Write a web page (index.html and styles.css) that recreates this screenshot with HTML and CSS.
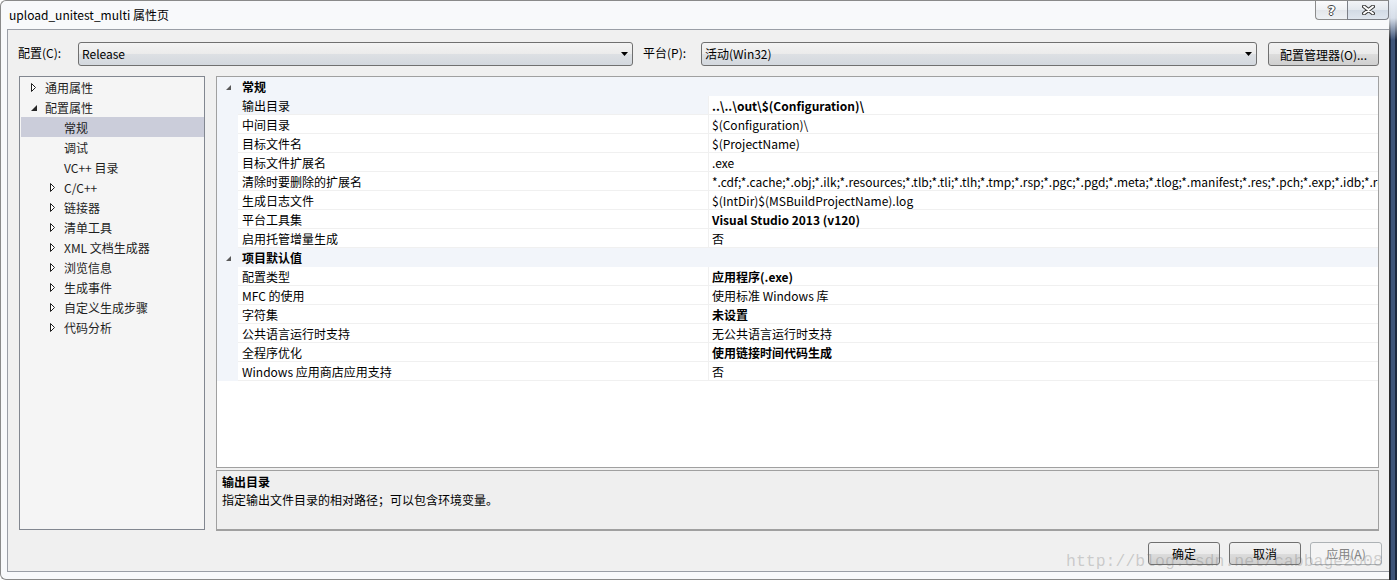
FILE: index.html
```html
<!DOCTYPE html>
<html lang="zh-CN">
<head>
<meta charset="utf-8">
<title>upload_unitest_multi 属性页</title>
<link rel="stylesheet" href="styles.css">
</head>
<body>
<div class="window">
  <div class="frame">
    <div class="titlebar">
      <span class="title">upload_unitest_multi 属性页</span>
      <div class="caption">
        <div class="cap-btn help"><span>?</span></div>
        <div class="cap-btn close">
          <svg width="13" height="10" viewBox="0 0 13 10"><path d="M2 1.5 L11 8.5 M11 1.5 L2 8.5" stroke="#3a3a3a" stroke-width="4" stroke-linecap="round"/><path d="M2 1.5 L11 8.5 M11 1.5 L2 8.5" stroke="#fff" stroke-width="2" stroke-linecap="round"/></svg>
        </div>
      </div>
    </div>
    <div class="client">
      <div class="config-row">
        <span class="lbl lbl-config">配置(C):</span>
        <div class="combo combo-config"><span>Release</span><svg class="arrow" width="7" height="4" viewBox="0 0 7 4"><path d="M0 0 H7 L3.5 4 Z" fill="#000"/></svg></div>
        <span class="lbl lbl-platform">平台(P):</span>
        <div class="combo combo-platform"><span>活动(Win32)</span><svg class="arrow" width="7" height="4" viewBox="0 0 7 4"><path d="M0 0 H7 L3.5 4 Z" fill="#000"/></svg></div>
        <div class="btn btn-mgr">配置管理器(O)...</div>
      </div>
      <div class="main">
        <div class="tree">
          <div class="titem l0"><span class="ico"><svg width="6" height="9" viewBox="0 0 6 9"><path d="M0.5 0.5 L4.5 4.5 L0.5 8.5 Z" fill="#fff" stroke="#1e1e1e"/></svg></span>通用属性</div>
          <div class="titem l0"><span class="ico exp"><svg width="6" height="6" viewBox="0 0 6 6"><path d="M6 0 V6 H0 Z" fill="#262626"/></svg></span>配置属性</div>
          <div class="titem l1 sel"><span class="ico"></span>常规</div>
          <div class="titem l1"><span class="ico"></span>调试</div>
          <div class="titem l1"><span class="ico"></span>VC++ 目录</div>
          <div class="titem l1"><span class="ico"><svg width="6" height="9" viewBox="0 0 6 9"><path d="M0.5 0.5 L4.5 4.5 L0.5 8.5 Z" fill="#fff" stroke="#1e1e1e"/></svg></span>C/C++</div>
          <div class="titem l1"><span class="ico"><svg width="6" height="9" viewBox="0 0 6 9"><path d="M0.5 0.5 L4.5 4.5 L0.5 8.5 Z" fill="#fff" stroke="#1e1e1e"/></svg></span>链接器</div>
          <div class="titem l1"><span class="ico"><svg width="6" height="9" viewBox="0 0 6 9"><path d="M0.5 0.5 L4.5 4.5 L0.5 8.5 Z" fill="#fff" stroke="#1e1e1e"/></svg></span>清单工具</div>
          <div class="titem l1"><span class="ico"><svg width="6" height="9" viewBox="0 0 6 9"><path d="M0.5 0.5 L4.5 4.5 L0.5 8.5 Z" fill="#fff" stroke="#1e1e1e"/></svg></span>XML 文档生成器</div>
          <div class="titem l1"><span class="ico"><svg width="6" height="9" viewBox="0 0 6 9"><path d="M0.5 0.5 L4.5 4.5 L0.5 8.5 Z" fill="#fff" stroke="#1e1e1e"/></svg></span>浏览信息</div>
          <div class="titem l1"><span class="ico"><svg width="6" height="9" viewBox="0 0 6 9"><path d="M0.5 0.5 L4.5 4.5 L0.5 8.5 Z" fill="#fff" stroke="#1e1e1e"/></svg></span>生成事件</div>
          <div class="titem l1"><span class="ico"><svg width="6" height="9" viewBox="0 0 6 9"><path d="M0.5 0.5 L4.5 4.5 L0.5 8.5 Z" fill="#fff" stroke="#1e1e1e"/></svg></span>自定义生成步骤</div>
          <div class="titem l1"><span class="ico"><svg width="6" height="9" viewBox="0 0 6 9"><path d="M0.5 0.5 L4.5 4.5 L0.5 8.5 Z" fill="#fff" stroke="#1e1e1e"/></svg></span>代码分析</div>
        </div>
        <div class="right">
          <div class="grid">
            <div class="prow cat"><span class="gut"><svg width="5" height="5" viewBox="0 0 5 5"><path d="M5 0 V5 H0 Z" fill="#595959"/></svg></span><span class="cname">常规</span></div>
            <div class="prow sel"><span class="gut"></span><span class="pname">输出目录</span><span class="pval b">..\..\out\$(Configuration)\</span></div>
            <div class="prow"><span class="gut"></span><span class="pname">中间目录</span><span class="pval">$(Configuration)\</span></div>
            <div class="prow"><span class="gut"></span><span class="pname">目标文件名</span><span class="pval">$(ProjectName)</span></div>
            <div class="prow"><span class="gut"></span><span class="pname">目标文件扩展名</span><span class="pval">.exe</span></div>
            <div class="prow"><span class="gut"></span><span class="pname">清除时要删除的扩展名</span><span class="pval">*.cdf;*.cache;*.obj;*.ilk;*.resources;*.tlb;*.tli;*.tlh;*.tmp;*.rsp;*.pgc;*.pgd;*.meta;*.tlog;*.manifest;*.res;*.pch;*.exp;*.idb;*.rep;*.xdc;*.pdb;*_manifest.rc;*.bsc;*.sbr;*.xml;*.metagen;*.bi</span></div>
            <div class="prow"><span class="gut"></span><span class="pname">生成日志文件</span><span class="pval">$(IntDir)$(MSBuildProjectName).log</span></div>
            <div class="prow"><span class="gut"></span><span class="pname">平台工具集</span><span class="pval b">Visual Studio 2013 (v120)</span></div>
            <div class="prow"><span class="gut"></span><span class="pname">启用托管增量生成</span><span class="pval">否</span></div>
            <div class="prow cat"><span class="gut"><svg width="5" height="5" viewBox="0 0 5 5"><path d="M5 0 V5 H0 Z" fill="#595959"/></svg></span><span class="cname">项目默认值</span></div>
            <div class="prow"><span class="gut"></span><span class="pname">配置类型</span><span class="pval b">应用程序(.exe)</span></div>
            <div class="prow"><span class="gut"></span><span class="pname">MFC 的使用</span><span class="pval">使用标准 Windows 库</span></div>
            <div class="prow"><span class="gut"></span><span class="pname">字符集</span><span class="pval b">未设置</span></div>
            <div class="prow"><span class="gut"></span><span class="pname">公共语言运行时支持</span><span class="pval">无公共语言运行时支持</span></div>
            <div class="prow"><span class="gut"></span><span class="pname">全程序优化</span><span class="pval b">使用链接时间代码生成</span></div>
            <div class="prow"><span class="gut"></span><span class="pname">Windows 应用商店应用支持</span><span class="pval">否</span></div>
          </div>
          <div class="desc">
            <div class="desc-title">输出目录</div>
            <div class="desc-text">指定输出文件目录的相对路径；可以包含环境变量。</div>
          </div>
        </div>
      </div>
      <div class="buttons">
        <div class="btn dlg">确定</div>
        <div class="btn dlg">取消</div>
        <div class="btn dlg disabled">应用(A)</div>
      </div>
    </div>
  </div>
  <div class="edge"></div>
  <div class="watermark">http://blog.csdn.net/cabbage2008</div>
</div>
</body>
</html>
```
FILE: styles.css
```css
* { box-sizing: border-box; }
html, body { margin: 0; padding: 0; }
body {
  width: 1397px;
  height: 580px;
  overflow: hidden;
  background: #ffffff;
  font-family: "Noto Sans CJK SC", sans-serif;
  font-size: 12px;
  color: #000;
}
.window {
  position: relative;
  display: flex;
  width: 1397px;
  height: 580px;
}
.frame {
  flex: 1;
  display: flex;
  flex-direction: column;
  background: #f8f9fb;
  border: 1px solid #8a8a8a;
  border-right: none;
  border-radius: 6px 0 0 6px;
  padding: 0 0 7px 6px;
  min-width: 0;
}
.edge {
  width: 8px;
  background:
    linear-gradient(to bottom, rgba(232,238,246,1) 0, rgba(232,238,246,0.9) 18px, rgba(232,238,246,0) 40px),
    linear-gradient(to right, #2a2a2a 0 1px, #1c2a44 1px 2px, #3e5479 2px 6px, #1d2940 6px);
}
.titlebar {
  height: 28px;
  display: flex;
  justify-content: space-between;
  align-items: flex-start;
}
.title {
  padding-left: 2px;
  margin-top: 5px;
  line-height: 18px;
  color: #000;
}
.caption { display: flex; }
.cap-btn {
  height: 19px;
  display: flex;
  align-items: center;
  justify-content: center;
}
.help {
  width: 32px;
  border: 1px solid #8c8c8c;
  border-top: none;
  border-right: none;
  border-radius: 0 0 0 4px;
  background: linear-gradient(#fbfbfc, #eef0f3 50%, #e3e6ea 50%, #eef1f4);
}
.help span {
  font-family: "DejaVu Sans", sans-serif;
  font-size: 13px;
  font-weight: bold;
  line-height: 15px;
  color: #fff;
  text-shadow: 1px 0 0 #444, -1px 0 0 #444, 0 1px 0 #444, 0 -1px 0 #444;
}
.close {
  width: 42px;
  border: 1px solid #7c7f86;
  border-top: none;
  border-radius: 0 0 4px 0;
  background: linear-gradient(#f2f4f7, #e2e7ed 50%, #d2dae4 50%, #dfe6ee);
}
.client {
  flex: 1;
  display: flex;
  flex-direction: column;
  background: #f0f0f0;
  border: 1px solid #9a9ea6;
  border-right: none;
}
.config-row {
  display: flex;
  align-items: center;
  height: 24px;
  margin-top: 12px;
  padding: 0 10px 0 10px;
}
.lbl { color: #000; white-space: nowrap; line-height: 18px; margin-top: -2px; }
.lbl-config { width: 60px; }
.lbl-platform { width: 58px; margin-left: 10px; }
.combo {
  height: 24px;
  display: flex;
  align-items: center;
  justify-content: space-between;
  border: 1px solid #707070;
  border-radius: 3px;
  background: linear-gradient(#f4f4f4, #ebebeb 50%, #dde0e4 50%, #d3d8de);
  padding: 0 4px 0 3px;
}
.combo span { line-height: 18px; margin-top: -1px; }
.combo-config { width: 555px; }
.combo-platform { flex: 1; }
.arrow { display: block; }
.btn {
  height: 24px;
  display: flex;
  align-items: center;
  justify-content: center;
  border: 1px solid #707070;
  border-radius: 3px;
  background: linear-gradient(#f2f2f2, #ebebeb 50%, #dddddd 50%, #cfcfcf);
  color: #000;
  white-space: nowrap;
}
.btn-mgr { width: 111px; margin-left: 11px; }
.main {
  display: flex;
  height: 455px;
  margin-top: 10px;
  padding: 0 10px 0 11px;
}
.tree {
  width: 186px;
  height: 454px;
  background: #f5f5f5;
  border: 1px solid #828790;
  color: #1e1e1e;
}
.titem {
  height: 20px;
  display: flex;
  align-items: center;
  margin-left: 1px;
  line-height: 21px;
  white-space: nowrap;
}
.titem.l0 { padding-left: 10px; }
.titem.l1 { padding-left: 29px; }
.titem.sel { background: #cbcdda; }
.ico {
  width: 14px;
  height: 20px;
  display: flex;
  align-items: center;
}
.ico svg { display: block; }
.ico.exp { align-items: flex-end; padding-bottom: 6px; }
.right {
  flex: 1;
  display: flex;
  flex-direction: column;
  margin-left: 11px;
  min-width: 0;
}
.grid {
  height: 392px;
  background: #ffffff;
  border: 1px solid #a0a0a0;
  overflow: hidden;
}
.prow {
  display: grid;
  grid-template-columns: 21px 471px 1fr;
  height: 19px;
  line-height: 20px;
  overflow: hidden;
}
.gut {
  background: #f2f5fa;
  display: flex;
  align-items: center;
  padding-left: 9px;
}
.gut svg { display: block; margin-top: 1px; }
.prow.cat { background: #f2f5fa; }
.cname {
  grid-column: 2 / 4;
  padding-left: 4px;
  font-weight: bold;
}
.pname {
  padding-left: 4px;
  border-bottom: 1px solid #f0f0f0;
  border-right: 1px solid #f0f0f0;
  white-space: nowrap;
  overflow: hidden;
}
.prow.sel .pname { background: #f2f5fa; }
.pval {
  padding-left: 3px;
  border-bottom: 1px solid #f0f0f0;
  white-space: nowrap;
  overflow: hidden;
}
.pval.b { font-weight: bold; }
.desc {
  height: 61px;
  margin-top: 2px;
  background: #efefef;
  border: 1px solid #a0a0a0;
  border-bottom-width: 2px;
  padding: 2px 5px;
  line-height: 18px;
}
.desc-title { font-weight: bold; }
.buttons {
  display: flex;
  justify-content: flex-end;
  gap: 9px;
  margin-top: 11px;
  padding-right: 7px;
}
.btn.dlg { width: 72px; height: 23px; }
.btn.disabled {
  border-color: #adb2b5;
  background: #f4f4f4;
  color: #838383;
}
.watermark {
  position: absolute;
  left: 1066px;
  top: 553px;
  font-family: "Liberation Mono", monospace;
  font-size: 16.5px;
  line-height: 17px;
  color: rgba(110, 110, 110, 0.3);
  white-space: nowrap;
  pointer-events: none;
}
```
